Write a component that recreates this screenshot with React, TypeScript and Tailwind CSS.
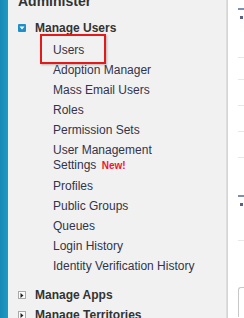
const font = { fontFamily: '"Liberation Sans", Arial, sans-serif' };

const items = [
  "Users",
  "Adoption Manager",
  "Mass Email Users",
  "Roles",
  "Permission Sets",
  "USER_MGMT",
  "Profiles",
  "Public Groups",
  "Queues",
  "Login History",
  "Identity Verification History",
];

function Expanded() {
  return (
    <span className="w-[8px] h-[8px] rounded-[1px] bg-[#1e8fc8] flex items-center justify-center shrink-0">
      <svg width="6" height="4" viewBox="0 0 6 4">
        <path d="M0.5 0.5 L5.5 0.5 L3 3.5 Z" fill="#fff" />
      </svg>
    </span>
  );
}

function Collapsed() {
  return (
    <span className="w-[8px] h-[8px] border border-[#a9a9a9] bg-[#fafafa] flex items-center justify-center shrink-0">
      <svg width="4" height="5" viewBox="0 0 4 5">
        <path d="M0.5 0 L3.5 2.5 L0.5 5 Z" fill="#222" />
      </svg>
    </span>
  );
}

function Section({ title, open }: { title: string; open?: boolean }) {
  return (
    <div className="h-[20px] flex items-center pl-[10px] gap-[9px]">
      {open ? <Expanded /> : <Collapsed />}
      <span className="text-[12px] font-bold leading-[20px] text-[#333]">{title}</span>
    </div>
  );
}

export default function App() {
  return (
    <div className="flex w-[244px] h-[318px] overflow-hidden bg-white" style={font}>
      <div className="w-[8px] shrink-0 bg-gradient-to-r from-[#1789b4] to-[#1c9bc7]" />
      <div className="w-[218px] shrink-0 bg-[#f1f1f1] flex flex-col">
        <div className="mt-[-8px] h-[18px] pl-[10px] text-[14px] font-bold leading-[18px] text-[#333]">
          Administer
        </div>
        <div className="mt-[8px]">
          <Section title="Manage Users" open />
        </div>
        <div className="mt-[2px] flex flex-col pl-[45px] text-[12px] text-[#33334a]">
          {items.map((it) =>
            it === "USER_MGMT" ? (
              <div key={it} className="py-[3px] leading-[15px]">
                User Management
                <br />
                Settings{" "}
                <span className="ml-[2px] text-[10px] font-bold text-[#f0142e]">New!</span>
              </div>
            ) : (
              <div key={it} className="relative h-[20px] leading-[20px] whitespace-nowrap">
                {it}
                {it === "Users" && (
                  <div className="absolute left-[-13px] top-[-6px] w-[66px] h-[30px] border-2 border-[#e41a1a] shadow-[1px_1px_2px_rgba(0,0,0,0.25)]" />
                )}
              </div>
            )
          )}
        </div>
        <div className="mt-[9px]">
          <Section title="Manage Apps" />
          <Section title="Manage Territories" />
        </div>
      </div>
      <div className="w-[2px] shrink-0 bg-gradient-to-r from-[#e2e2e2] to-[#d0d0d0]" />
      <div className="flex-1 bg-white flex flex-col pl-[10px] relative">
        <div className="mt-[8px] h-[2px] bg-[#7d8db5]" />
        <div className="mt-[6px] ml-[2px] w-[3px] h-[3px] bg-[#5a6285]" />
        <div className="mt-[38px] h-px bg-[#e8e8e8]" />
        <div className="mt-[21px] h-px bg-[#e8e8e8]" />
        <div className="mt-[25px] h-px bg-[#e8e8e8]" />
        <div className="mt-[25px] h-px bg-[#e8e8e8]" />
        <div className="mt-[25px] h-px bg-[#e8e8e8]" />
        <div className="mt-[37px] h-[2px] bg-[#7d8db5]" />
        <div className="mt-[6px] ml-[2px] w-[3px] h-[3px] bg-[#5a6285]" />
        <div className="mt-[34px] h-px bg-[#e8e8e8]" />
        <div className="mt-[46px] h-[30px] rounded-tl-[3px] border-l border-t border-[#c8c8c8]" />
      </div>
    </div>
  );
}
